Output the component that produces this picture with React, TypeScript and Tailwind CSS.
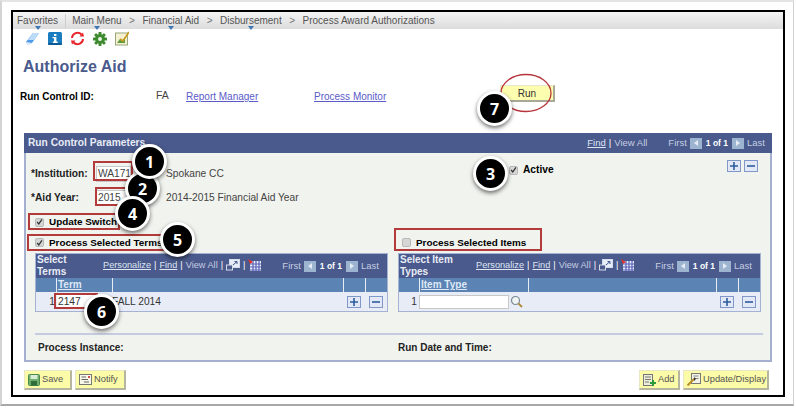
const Crumb = ({ label, arrow }: { label: string; arrow?: boolean }) => (
  <span className="relative whitespace-nowrap">
    {label}
    {arrow && (
      <span className="absolute left-1/2 -translate-x-1/2 top-[13px] w-0 h-0 border-x-[3px] border-x-transparent border-t-[4px] border-t-[#3f77b5]" />
    )}
  </span>
);

const Sep = () => <span className="text-[#777] text-[10px] mx-[7.5px]">&gt;</span>;

const ClearIcon = () => (
  <svg width="15" height="15" viewBox="0 0 15 15">
    <path d="M1 11 L8 2 L14 2 L7 12 L3 14 Z" fill="#4f9bea" />
    <path d="M3 9 L8 2 L14 2 L9 9 Z" fill="#bcdcf8" />
    <path d="M1 11 L7 12 L5 14 L3 14 Z" fill="#dfeaf6" />
  </svg>
);

const InfoIcon = () => (
  <svg width="14" height="15" viewBox="0 0 14 15">
    <rect x="0" y="1" width="14" height="13" rx="1.5" fill="#1b7cc0" />
    <rect x="0" y="12" width="14" height="2" rx="1" fill="#0e5a94" />
    <rect x="6" y="3" width="2.4" height="2" fill="#fff" />
    <path d="M4.5 6 H8.4 V10.6 H9.6 V12 H4.8 V10.6 H6 V7.3 H4.5 Z" fill="#fff" />
  </svg>
);

const RefreshIcon = () => (
  <svg width="15" height="15" viewBox="0 0 15 15" fill="none">
    <path d="M2 7 A5.5 5.5 0 0 1 11.5 3.5" stroke="#e8222a" strokeWidth="2" />
    <path d="M13 8 A5.5 5.5 0 0 1 3.5 11.5" stroke="#e8222a" strokeWidth="2" />
    <path d="M9.5 5.5 L14 5.5 L13 1.5 Z" fill="#e8222a" />
    <path d="M5.5 9.5 L1 9.5 L2 13.5 Z" fill="#e8222a" />
  </svg>
);

const GearIcon = () => (
  <svg width="14" height="14" viewBox="0 0 14 14">
    <g fill="#3e8a2e">
      <circle cx="7" cy="7" r="4.8" />
      <rect x="5.5" y="0" width="3" height="14" rx="0.6" />
      <rect x="0" y="5.5" width="14" height="3" rx="0.6" />
      <rect x="5.5" y="0" width="3" height="14" rx="0.6" transform="rotate(45 7 7)" />
      <rect x="5.5" y="0" width="3" height="14" rx="0.6" transform="rotate(-45 7 7)" />
    </g>
    <circle cx="7" cy="7" r="2" fill="#e9f2e4" />
  </svg>
);

const ReportIcon = () => (
  <svg width="14" height="15" viewBox="0 0 14 15">
    <rect x="0.5" y="2" width="12" height="12" fill="#f4f1d2" stroke="#9aa77a" />
    <path d="M2 12 L5 8 L7 10 L10 6 V12 Z" fill="#5f9a3e" />
    <path d="M5 8 L8 10 L14 1" stroke="#c79a1c" strokeWidth="1.6" fill="none" />
  </svg>
);

const Check = ({ checked = true }: { checked?: boolean }) => (
  <span className="w-[9px] h-[9px] rounded-[2px] bg-[#d6d6d6] border border-[#b9b9b9] flex items-center justify-center shrink-0">
    {checked && (
      <svg width="8" height="8" viewBox="0 0 8 8">
        <path d="M1.3 4 L3.2 6.2 L6.8 1" stroke="#333" strokeWidth="1.4" fill="none" />
      </svg>
    )}
  </span>
);

const PlusMinus = ({ gap }: { gap: string }) => (
  <div className={`flex ${gap}`}>
    <span className="w-[14px] h-[12px] bg-[#e2e8f6] border border-[#8097c8] flex items-center justify-center text-[#2d5c9e]">
      <svg width="8" height="8" viewBox="0 0 8 8">
        <path d="M0 4 H8 M4 0 V8" stroke="currentColor" strokeWidth="1.6" />
      </svg>
    </span>
    <span className="w-[14px] h-[12px] bg-[#e2e8f6] border border-[#8097c8] flex items-center justify-center text-[#2d5c9e]">
      <svg width="8" height="8" viewBox="0 0 8 8">
        <path d="M0 4 H8" stroke="currentColor" strokeWidth="1.6" />
      </svg>
    </span>
  </div>
);

const Pager = () => (
  <div className="flex items-center text-[9.5px] text-[#c5cde2] whitespace-nowrap">
    <span>First</span>
    <span className="w-[12px] h-[11px] bg-[#9db4d0] ml-[3px] mr-[4px] flex items-center justify-center">
      <span className="w-0 h-0 border-y-[3.5px] border-y-transparent border-r-[4px] border-r-[#e4ebf4]" />
    </span>
    <span className="font-bold text-white text-[8.5px]">1 of 1</span>
    <span className="w-[12px] h-[11px] bg-[#9db4d0] ml-[4px] mr-[3px] flex items-center justify-center">
      <span className="w-0 h-0 border-y-[3.5px] border-y-transparent border-l-[4px] border-l-[#e4ebf4]" />
    </span>
    <span>Last</span>
  </div>
);

const GridLinks = () => (
  <div className="flex items-center gap-[3px] text-[9.2px] text-[#dfe5f2] whitespace-nowrap">
    <span className="underline">Personalize</span>
    <span className="text-white">|</span>
    <span className="underline">Find</span>
    <span className="text-white">|</span>
    <span className="text-[#c5cde2]">View All</span>
    <span className="text-white">|</span>
    <svg width="14" height="13" viewBox="0 0 14 13">
      <rect x="3.5" y="0.5" width="10" height="8" fill="#e8eef8" stroke="#d5dcea" />
      <path d="M7 6 L11 2.5 M8.5 2.5 H11 V5" stroke="#3c5488" fill="none" />
      <rect x="0.5" y="6" width="6" height="5" fill="#4a5a8c" stroke="#d5dcea" />
    </svg>
    <span className="text-white">|</span>
    <svg width="13" height="13" viewBox="0 0 13 13">
      <rect x="2" y="2" width="11" height="10" fill="#e8eef8" />
      <path d="M2 5 H13 M2 8 H13 M2 11 H13 M5 2 V12 M8 2 V12 M11 2 V12" stroke="#5860b8" strokeWidth="1.2" />
      <path d="M0 0 L5 3 L2 5 Z" fill="#e0322c" />
    </svg>
  </div>
);

const Grid = ({
  title,
  width,
  titleWidth,
  labelCol,
  fillCol,
  label,
  children,
}: {
  title: string[];
  width: string;
  titleWidth: string;
  labelCol: string;
  fillCol: string;
  label: string;
  children: React.ReactNode;
}) => (
  <div className={`${width} border border-[#a5b2d2] bg-[#e8ecf7]`}>
    <div className="h-[24px] bg-[#4a5a8c] flex items-center pl-[1px] pr-[8px]">
      <div className={`${titleWidth} shrink-0 text-[10px] leading-[12px] font-bold text-[#e8ecf6]`}>
        {title.map((t) => (
          <div key={t}>{t}</div>
        ))}
      </div>
      <GridLinks />
      <div className="ml-auto">
        <Pager />
      </div>
    </div>
    <div className="h-[14px] flex gap-[1px] bg-[#e8ecf7] text-[10px] font-bold text-[#dfe8f5]">
      <div className="w-[20px] bg-[#5b84b4]" />
      <div className={`${labelCol} bg-[#5b84b4] pl-[1px] underline leading-[13px]`}>{label}</div>
      <div className={`${fillCol} bg-[#5b84b4]`} />
      <div className="w-[21px] bg-[#5b84b4]" />
      <div className="w-[21px] bg-[#5b84b4]" />
    </div>
    <div className="h-[19px] flex items-center text-[10.2px] text-[#333]">{children}</div>
  </div>
);

const FootButton = ({ label, icon, width }: { label: string; icon: React.ReactNode; width: string }) => (
  <div
    className={`${width} h-[20px] bg-[#fbfba8] border border-[#e8e8c8] border-r-2 border-b-2 border-r-[#b5b5a0] border-b-[#b5b5a0] flex items-center pl-[3px] gap-[2px] text-[9.3px] text-[#555]`}
  >
    {icon}
    <span>{label}</span>
  </div>
);

const SaveIcon = () => (
  <svg width="12" height="12" viewBox="0 0 12 12">
    <rect x="0.5" y="0.5" width="11" height="11" rx="1" fill="#6fae6a" stroke="#4a8a4c" />
    <rect x="2.5" y="1" width="7" height="4" fill="#d8ecd6" />
    <rect x="3" y="7" width="6" height="4.5" fill="#2f6d3a" />
  </svg>
);

const NotifyIcon = () => (
  <svg width="13" height="11" viewBox="0 0 13 11">
    <rect x="0.5" y="0.5" width="12" height="10" fill="#f8f8e8" stroke="#777" />
    <path d="M2.5 3 H7 M2.5 5.5 H9 M5 8 H10" stroke="#666" />
    <path d="M9 2 H11 V4 H9 Z" fill="#d05050" />
  </svg>
);

const AddIcon = () => (
  <svg width="13" height="12" viewBox="0 0 13 12">
    <rect x="0.5" y="0.5" width="9" height="11" fill="#eeeed8" stroke="#777" />
    <path d="M2 3 H8 M2 5.5 H8 M2 8 H6" stroke="#777" />
    <path d="M7 9 H13 M10 6 V12" stroke="#2a9a3a" strokeWidth="2" />
  </svg>
);

const UpdateIcon = () => (
  <svg width="14" height="13" viewBox="0 0 14 13">
    <rect x="4.5" y="0.5" width="9" height="10" fill="#f3f3e6" stroke="#777" />
    <path d="M6.5 3 H11.5 M6.5 5.5 H11.5" stroke="#888" />
    <path d="M0.5 12.5 L7 6" stroke="#b8902a" strokeWidth="2" />
    <path d="M7 4 L9 6 L7 8 Z" fill="#333" />
  </svg>
);

const Marker = ({ n, pos }: { n: number; pos: string }) => (
  <div
    className={`absolute ${pos} w-[35px] h-[35px] rounded-full bg-black border-[3px] border-white shadow-[0_2px_4px_rgba(0,0,0,0.55)] flex items-center justify-center text-white text-[16px] font-bold font-['Open_Sans',sans-serif]`}
  >
    {n}
  </div>
);

const RedBox = ({ pos }: { pos: string }) => (
  <div className={`absolute ${pos} border-2 border-[#b23a3a]`} />
);

export default function App() {
  return (
    <div className="relative w-[796px] h-[408px] bg-white overflow-hidden font-['Liberation_Sans',Arial,sans-serif]">
      <div className="w-[794px] h-[406px] bg-white border-l-2 border-t-2 border-r border-b-2 border-l-[#d4d4d4] border-t-[#e4e4e4] border-r-[#d0d0d0] border-b-[#a8a8a8] pl-[9px] pt-[8px]">
        <div className="w-[774px] h-[387px] border-2 border-black flex flex-col">
          {/* breadcrumb bar */}
          <div className="h-[17px] shrink-0 bg-gradient-to-b from-[#f4f4f4] to-[#dcdcdc] flex items-center text-[10px] text-[#555] pl-[4px]">
            <Crumb label="Favorites" arrow />
            <span className="w-[1px] h-[14px] bg-[#cfcfcf] mx-[6.5px]" />
            <Crumb label="Main Menu" arrow />
            <Sep />
            <Crumb label="Financial Aid" arrow />
            <Sep />
            <Crumb label="Disbursement" arrow />
            <Sep />
            <Crumb label="Process Award Authorizations" />
          </div>

          <div className="flex items-center gap-[8px] h-[19px] pl-[12px] shrink-0">
            <ClearIcon />
            <InfoIcon />
            <RefreshIcon />
            <GearIcon />
            <ReportIcon />
          </div>

          <div className="pl-[10px] pt-[10px] text-[16px] leading-[18px] font-bold text-[#4a5a8c]">Authorize Aid</div>

          <div className="flex items-center h-[14px] mt-[13px] pl-[7px] text-[10px] whitespace-nowrap">
            <span className="w-[136px] font-bold text-black">Run Control ID:</span>
            <span className="w-[30px] text-[#444] text-[10.5px]">FA</span>
            <span className="w-[128px] underline text-[#5a5ac8]">Report Manager</span>
            <span className="w-[186px] underline text-[#5a5ac8]">Process Monitor</span>
            <div className="w-[55px] h-[17px] mb-[5px] bg-[#fdfdb0] border border-[#e8e8c8] border-r-2 border-b-2 border-r-[#a8a898] border-b-[#a8a898] flex items-center justify-center text-[#333]">
              Run
            </div>
          </div>

          {/* run control panel */}
          <div className="ml-[11px] mt-[30px] w-[748px] h-[229px] border-2 border-t-0 border-[#a5afd0] bg-[#f1f3ee] flex flex-col shrink-0">
            <div className="h-[20px] shrink-0 bg-[#4a5a8c] flex items-center justify-between -mx-[2px] pl-[4px] pr-[7px]">
              <span className="text-[10.2px] font-bold text-[#e8ecf6]">Run Control Parameters</span>
              <div className="flex items-center gap-[21px]">
                <div className="flex items-center gap-[3px] text-[9.5px] text-[#dfe5f2]">
                  <span className="underline">Find</span>
                  <span className="text-white">|</span>
                  <span className="text-[#c5cde2]">View All</span>
                </div>
                <Pager />
              </div>
            </div>

            <div className="flex h-[18px] items-center pl-[5px] mt-[12px] text-[10.2px]">
              <span className="w-[61px] font-bold text-[#222]">*Institution:</span>
              <span className="ml-[4px] w-[35px] h-[16px] pl-[1px] leading-[14px] bg-white border border-[#c8c8c8] text-[#444]">WA171</span>
              <span className="ml-[35px] w-[343px] text-[#444]">Spokane CC</span>
              <div className="flex items-center gap-[5px] self-start h-[10px]">
                <Check />
                <span className="font-bold text-black">Active</span>
              </div>
              <div className="ml-auto mr-[12px] self-start -mt-[5px]">
                <PlusMinus gap="gap-[3px]" />
              </div>
            </div>

            <div className="flex h-[18px] items-center pl-[5px] mt-[6px] text-[10.2px]">
              <span className="w-[64px] font-bold text-[#222]">*Aid Year:</span>
              <span className="ml-[1px] w-[32px] h-[16px] pl-[1px] leading-[14px] bg-white border border-[#c8c8c8] text-[#444]">2015</span>
              <span className="ml-[38px] text-[#444]">2014-2015 Financial Aid Year</span>
            </div>

            <div className="flex h-[20px] items-center gap-[5px] pl-[9px] mt-[5px] text-[9.9px]">
              <Check />
              <span className="font-bold text-black">Update Switch</span>
            </div>

            <div className="flex h-[20px] items-center pl-[9px] mt-[1px] text-[9.9px]">
              <div className="flex items-center gap-[5px] w-[367px]">
                <Check />
                <span className="font-bold text-black">Process Selected Terms</span>
              </div>
              <div className="flex items-center gap-[5px]">
                <Check checked={false} />
                <span className="font-bold text-black">Process Selected Items</span>
              </div>
            </div>

            <div className="flex gap-[10px] pl-[9px]">
              <Grid
                title={["Select", "Terms"]}
                width="w-[353px]"
                titleWidth="w-[66px]"
                labelCol="w-[55px]"
                fillCol="w-[230px]"
                label="Term"
              >
                <span className="w-[19px] text-right">1</span>
                <span className="ml-[2px] w-[40px] h-[15px] pl-[1px] leading-[16px] bg-white">2147</span>
                <span className="ml-[15px]">FALL 2014</span>
                <div className="ml-auto mr-[4px]">
                  <PlusMinus gap="gap-[8px]" />
                </div>
              </Grid>
              <Grid
                title={["Select Item", "Types"]}
                width="w-[363px]"
                titleWidth="w-[76px]"
                labelCol="w-[108px]"
                fillCol="w-[187px]"
                label="Item Type"
              >
                <span className="w-[18px] text-right">1</span>
                <span className="ml-[2px] w-[90px] h-[14px] bg-white border border-[#c8c8c8]" />
                <svg className="ml-[1px]" width="13" height="13" viewBox="0 0 13 13" fill="none">
                  <circle cx="5.5" cy="5.5" r="4" stroke="#7a8a90" strokeWidth="1.2" fill="#eef4f6" />
                  <path d="M8.5 8.5 L12 12" stroke="#b08a3a" strokeWidth="1.8" />
                </svg>
                <div className="ml-auto mr-[4px]">
                  <PlusMinus gap="gap-[8px]" />
                </div>
              </Grid>
            </div>

            <div className="ml-[9px] mt-[21px] w-[728px] h-[2px] bg-[#c5cbe0] shrink-0" />
            <div className="flex h-[24px] items-center pl-[12px] text-[10px] font-bold text-[#222]">
              <span className="w-[360px]">Process Instance:</span>
              <span>Run Date and Time:</span>
            </div>
          </div>

          {/* bottom buttons */}
          <div className="flex mt-[8px] pl-[11px] pr-[14px] shrink-0">
            <div className="flex gap-[3px]">
              <FootButton label="Save" icon={<SaveIcon />} width="w-[48px]" />
              <FootButton label="Notify" icon={<NotifyIcon />} width="w-[51px]" />
            </div>
            <div className="flex gap-[3px] ml-auto">
              <FootButton label="Add" icon={<AddIcon />} width="w-[41px]" />
              <FootButton label="Update/Display" icon={<UpdateIcon />} width="w-[86px]" />
            </div>
          </div>
        </div>
      </div>

      {/* annotations */}
      <RedBox pos="left-[93px] top-[161px] w-[40px] h-[20px]" />
      <RedBox pos="left-[95px] top-[187px] w-[34px] h-[19px]" />
      <RedBox pos="left-[28px] top-[213px] w-[92px] h-[17px]" />
      <RedBox pos="left-[27px] top-[234px] w-[139px] h-[17px]" />
      <RedBox pos="left-[54px] top-[293px] w-[44px] h-[16px]" />
      <RedBox pos="left-[394px] top-[228px] w-[148px] h-[23px]" />

      <svg className="absolute left-[499px] top-[73px]" width="54" height="40" viewBox="0 0 54 40" fill="none">
        <ellipse cx="27" cy="20" rx="25" ry="18.5" stroke="#b8353c" strokeWidth="1.3" />
      </svg>

      <Marker n={7} pos="left-[477px] top-[91px]" />
      <Marker n={3} pos="left-[473px] top-[156px]" />
      <Marker n={2} pos="left-[125px] top-[171px]" />
      <Marker n={1} pos="left-[132px] top-[144px]" />
      <Marker n={4} pos="left-[115px] top-[196px]" />
      <Marker n={5} pos="left-[160px] top-[222px]" />
      <Marker n={6} pos="left-[84px] top-[294px]" />
    </div>
  );
}
